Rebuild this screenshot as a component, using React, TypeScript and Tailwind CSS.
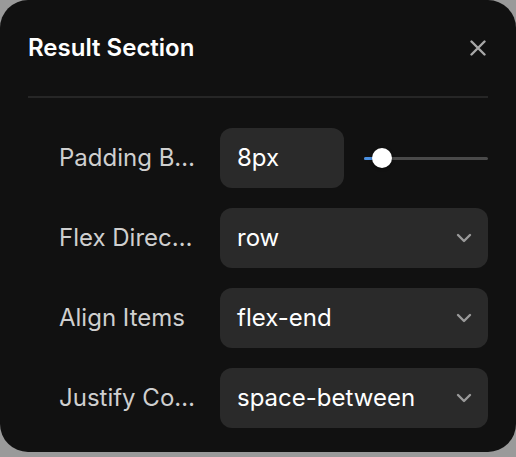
import React from "react";

const labelCls =
  "w-[141px] shrink-0 truncate text-2xl text-[#cfcfcf]";

function Chevron() {
  return (
    <svg width="16" height="10" viewBox="0 0 16 10" fill="none" className="shrink-0">
      <path d="M2 2l6 6 6-6" stroke="#9a9a9a" strokeWidth="2.4" strokeLinecap="round" strokeLinejoin="round" />
    </svg>
  );
}

function SelectRow({ label, value }: { label: string; value: string }) {
  return (
    <div className="flex items-center gap-5">
      <div className={labelCls}>{label}</div>
      <div className="flex h-[60px] flex-1 items-center justify-between rounded-xl bg-[#2a2a2a] pl-[17px] pr-4">
        <span className="text-2xl text-white">{value}</span>
        <Chevron />
      </div>
    </div>
  );
}

export default function App() {
  return (
    <div className="h-[457px] w-[516px] bg-[#9a9a9a]" style={{ fontFamily: "Inter, 'Noto Sans', sans-serif" }}>
      <div className="h-[452px] rounded-[28px] bg-[#111111] px-7 pt-7">
        {/* Header */}
        <div className="flex h-10 items-center justify-between">
          <h1 className="text-2xl font-semibold text-white">Result Section</h1>
          <svg width="16" height="16" viewBox="0 0 16 16" className="mr-[2px]">
            <path d="M1.5 1.5l13 13M14.5 1.5l-13 13" stroke="#a8a8a8" strokeWidth="2.4" strokeLinecap="round" />
          </svg>
        </div>
        <div className="mt-7 h-[2px] bg-[#262626]" />

        {/* Rows */}
        <div className="mt-[30px] flex flex-col gap-5 pl-[31px]">
          <div className="flex items-center gap-5">
            <div className={labelCls}>Padding Bottom</div>
            <div className="flex h-[60px] w-[124px] shrink-0 items-center rounded-xl bg-[#2a2a2a] pl-[17px]">
              <span className="text-2xl text-white">8px</span>
            </div>
            <div className="relative flex h-5 flex-1 items-center">
              <div className="h-[3px] w-full rounded-full bg-[#4a4a4a]" />
              <div className="absolute left-0 h-[3px] w-[18px] rounded-full bg-[#4a90e2]" />
              <div className="absolute left-[8px] h-5 w-5 rounded-full bg-white shadow-[0_1px_3px_rgba(0,0,0,0.5)]" />
            </div>
          </div>
          <SelectRow label="Flex Direction" value="row" />
          <SelectRow label="Align Items" value="flex-end" />
          <SelectRow label="Justify Content" value="space-between" />
        </div>
      </div>
    </div>
  );
}
